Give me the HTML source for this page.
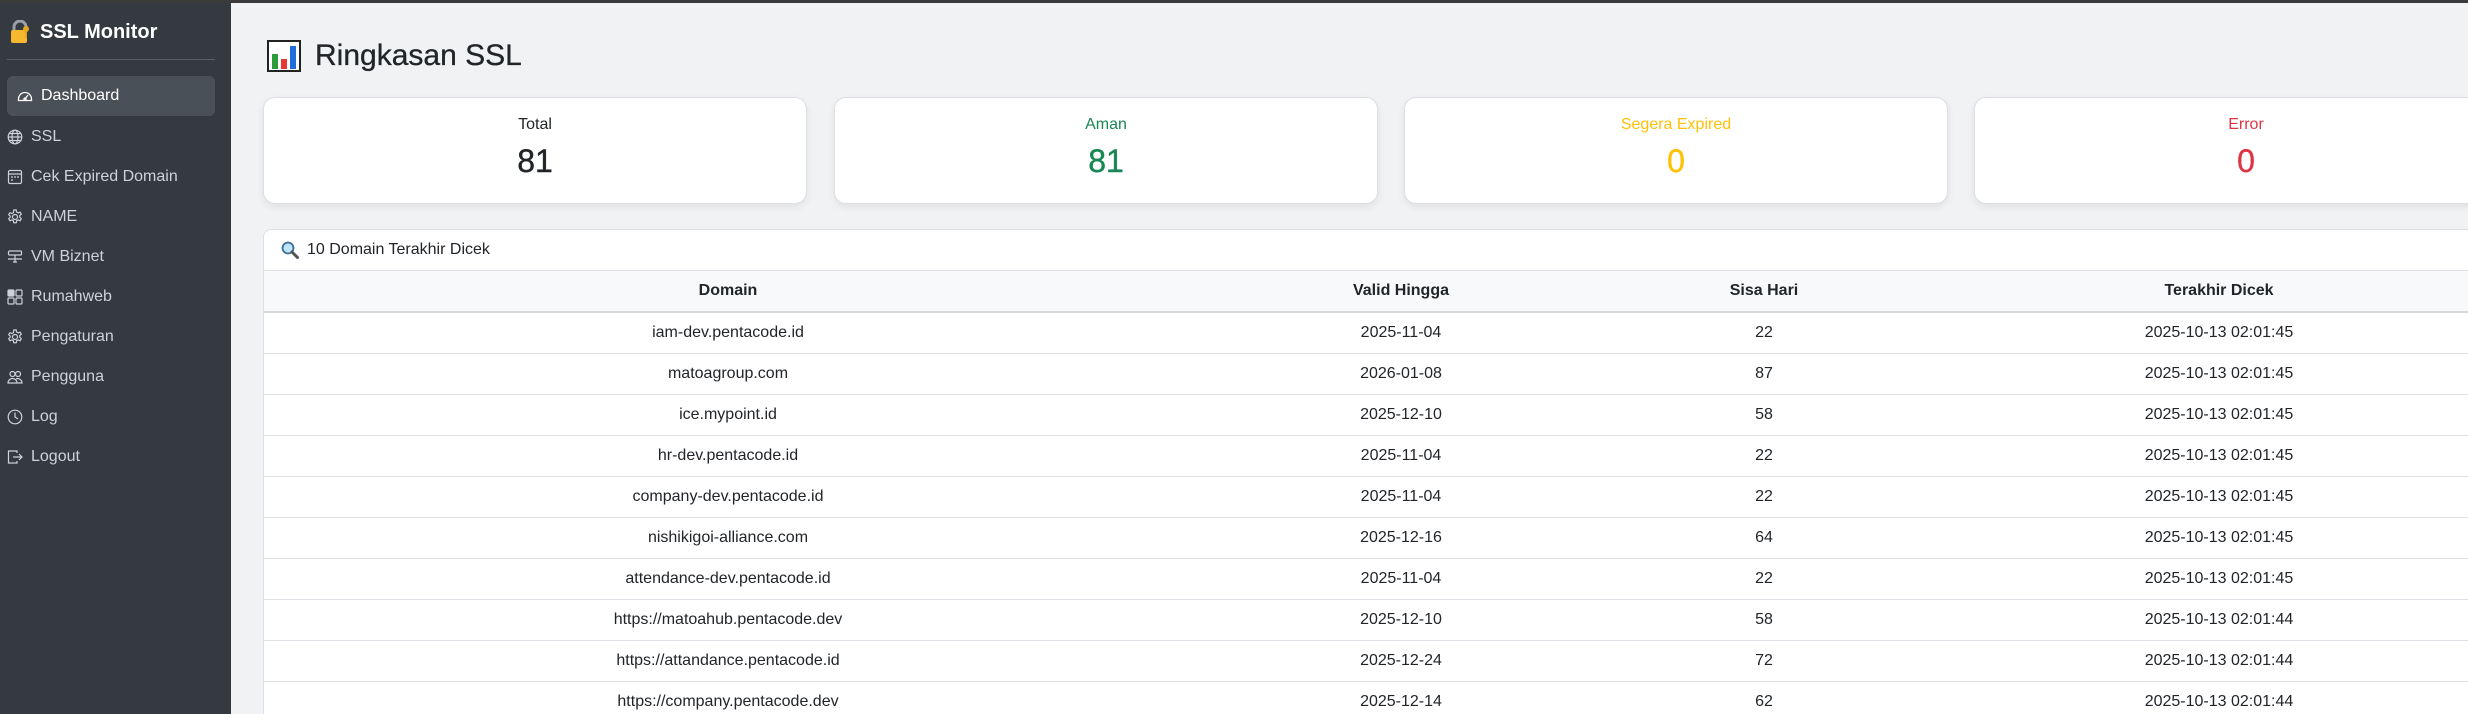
<!DOCTYPE html>
<html><head><meta charset="utf-8"><style>
*{box-sizing:border-box;margin:0;padding:0}
html,body{width:2468px;height:714px;overflow:hidden}
body{font-family:"Liberation Sans",Arial,sans-serif;background:#f1f2f4;color:#212529;position:relative;font-size:16px}
.topline{position:absolute;left:0;top:0;width:2468px;height:3px;background:#3b3b3b;z-index:5}
.side{position:absolute;left:0;top:0;width:231px;height:714px;background:#343a40;color:#fff}
.brand{position:absolute;left:9px;top:19px;height:26px;display:flex;align-items:center;font-weight:bold;font-size:20px}
.brand svg{margin-right:9px}
.div{position:absolute;left:7px;top:59px;width:208px;height:1px;background:#5a6068}
.nav{position:absolute;left:7px;width:208px;height:40px;display:flex;align-items:center;color:#cfd2d6;font-size:16px}
.nav svg{width:16px;height:16px;margin-right:8px;flex:none}
.nav.act{background:#4a5057;border-radius:6px;color:#fff;padding-left:10px}
.main{position:absolute;left:263px;top:0}
h2{position:absolute;left:0;top:39px;font-size:30px;font-weight:normal;white-space:nowrap;display:flex;align-items:center;-webkit-text-stroke:0.3px #212529}
h2 svg{margin-right:14px;margin-left:4px}
.card{position:absolute;top:97px;width:544px;height:107px;background:#fff;border:1px solid #dcdfe3;border-radius:12px;box-shadow:0 3px 8px rgba(0,0,0,.07);text-align:center}
.card .l{position:absolute;top:18px;width:100%;font-size:16px}
.card .n{position:absolute;top:45px;width:100%;font-size:32px;-webkit-text-stroke:0.4px currentColor}
.tc{position:absolute;top:229px;left:0;width:2256px;height:520px;background:#fff;border:1px solid #dcdfe3;border-radius:8px;overflow:hidden}
.th{height:41px;display:flex;align-items:center;padding-left:17px;border-bottom:1px solid #dcdfe3}
.th svg{margin-right:8px}
table{border-collapse:collapse;width:2256px;table-layout:fixed}
td,th{text-align:center;height:41px;border-bottom:1px solid #dee2e6;font-size:16px;padding:0}
thead th{background:#f8f9fa;font-weight:bold;border-bottom:2px solid #d6d9dc;height:41px}
</style></head><body>
<div class="topline"></div>
<div class="side">
 <div class="brand"><svg width="22" height="24" viewBox="0 0 22 24"><path d="M5 11V7a6 6 0 0 1 12 0v4" fill="none" stroke="#9aa0a6" stroke-width="3"/><rect x="2" y="10" width="16" height="13" rx="2" fill="#f5b82e"/><circle cx="17" cy="9" r="3" fill="#e7a81f"/><rect x="16" y="10" width="2" height="8" fill="#e7a81f"/></svg>SSL Monitor</div>
 <div class="div"></div>
 <div class="nav act" style="top:76px"><svg viewBox="0 0 16 16" fill="none" stroke="#fff" stroke-width="1.3"><path d="M1.5 11a6.5 6.5 0 1 1 13 0v1.5h-13z"/><path d="M8 11l3-4"/><circle cx="8" cy="11" r="1"/></svg>Dashboard</div>
 <div class="nav" style="top:117px"><svg viewBox="0 0 16 16" fill="none" stroke="#cfd2d6" stroke-width="1.2"><circle cx="8" cy="8" r="6.8"/><ellipse cx="8" cy="8" rx="3" ry="6.8"/><path d="M1.2 8h13.6M2 4.5h12M2 11.5h12"/></svg>SSL</div>
 <div class="nav" style="top:157px"><svg viewBox="0 0 16 16" fill="none" stroke="#cfd2d6" stroke-width="1.2"><rect x="1.5" y="1.5" width="13" height="13" rx="1.5"/><path d="M1.5 5h13M4 8h2M7 8h2M10 8h2M4 11h2"/></svg>Cek Expired Domain</div>
 <div class="nav" style="top:197px"><svg viewBox="0 0 16 16" fill="none" stroke="#cfd2d6" stroke-width="1.2"><circle cx="8" cy="8" r="2.5"/><path d="M6.8 1h2.4l.4 2 1.6.9 1.9-.8 1.2 2-1.5 1.4v1.8l1.5 1.4-1.2 2-1.9-.8-1.6.9-.4 2H6.8l-.4-2-1.6-.9-1.9.8-1.2-2 1.5-1.4V7.1L1.7 5.7l1.2-2 1.9.8 1.6-.9z"/></svg>NAME</div>
 <div class="nav" style="top:237px"><svg viewBox="0 0 16 16" fill="none" stroke="#cfd2d6" stroke-width="1.2"><rect x="1.5" y="2" width="13" height="4" rx="1"/><path d="M8 6v4M1 10h14M6 13h4M8 10v3"/></svg>VM Biznet</div>
 <div class="nav" style="top:277px"><svg viewBox="0 0 16 16" fill="none" stroke="#cfd2d6" stroke-width="1.2"><rect x="1" y="1" width="6" height="6" rx="1" fill="#cfd2d6"/><rect x="9" y="1" width="6" height="6" rx="1"/><rect x="1" y="9" width="6" height="6" rx="1"/><rect x="9" y="9" width="6" height="6" rx="1"/></svg>Rumahweb</div>
 <div class="nav" style="top:317px"><svg viewBox="0 0 16 16" fill="none" stroke="#cfd2d6" stroke-width="1.2"><circle cx="8" cy="8" r="2.5"/><path d="M6.8 1h2.4l.4 2 1.6.9 1.9-.8 1.2 2-1.5 1.4v1.8l1.5 1.4-1.2 2-1.9-.8-1.6.9-.4 2H6.8l-.4-2-1.6-.9-1.9.8-1.2-2 1.5-1.4V7.1L1.7 5.7l1.2-2 1.9.8 1.6-.9z"/></svg>Pengaturan</div>
 <div class="nav" style="top:357px"><svg viewBox="0 0 16 16" fill="none" stroke="#cfd2d6" stroke-width="1.2"><circle cx="5.5" cy="5" r="2.5"/><circle cx="11" cy="5" r="2.5"/><path d="M1 14a4.5 4.5 0 0 1 9 0zM9.5 14H15a4.5 4.5 0 0 0-6-4.2"/></svg>Pengguna</div>
 <div class="nav" style="top:397px"><svg viewBox="0 0 16 16" fill="none" stroke="#cfd2d6" stroke-width="1.2"><circle cx="8" cy="8" r="6.8"/><path d="M8 3.5V8l3 2"/></svg>Log</div>
 <div class="nav" style="top:437px"><svg viewBox="0 0 16 16" fill="none" stroke="#cfd2d6" stroke-width="1.2"><path d="M10 4V2H1.5v12H10v-2"/><path d="M6 8h9M12 5l3 3-3 3"/></svg>Logout</div>
</div>
<div class="main">
 <h2><svg width="34" height="32" viewBox="0 0 34 32"><rect x="1" y="1" width="32" height="30" fill="#fff" stroke="#222" stroke-width="2"/><rect x="5" y="14" width="6" height="15" fill="#2a9d3a"/><rect x="14" y="19" width="6" height="10" fill="#e53935"/><rect x="23" y="6" width="6" height="23" fill="#1e6fd9"/></svg>Ringkasan SSL</h2>
 <div class="card" style="left:0"><div class="l">Total</div><div class="n">81</div></div>
 <div class="card" style="left:571px"><div class="l" style="color:#198754">Aman</div><div class="n" style="color:#198754">81</div></div>
 <div class="card" style="left:1141px"><div class="l" style="color:#ffc107">Segera Expired</div><div class="n" style="color:#ffc107">0</div></div>
 <div class="card" style="left:1711px"><div class="l" style="color:#dc3545">Error</div><div class="n" style="color:#dc3545">0</div></div>
 <div class="tc">
  <div class="th"><svg width="18" height="18" viewBox="0 0 18 18"><circle cx="7" cy="7" r="5.5" fill="#bfe3f7" stroke="#3a6f99" stroke-width="1.8"/><path d="M11 11l5.5 5.5" stroke="#555" stroke-width="3" stroke-linecap="round"/></svg>10 Domain Terakhir Dicek</div>
  <table><colgroup><col style="width:928px"><col style="width:418px"><col style="width:308px"><col style="width:602px"></colgroup>
  <thead><tr><th>Domain</th><th>Valid Hingga</th><th>Sisa Hari</th><th>Terakhir Dicek</th></tr></thead>
  <tbody>
  <tr><td>iam-dev.pentacode.id</td><td>2025-11-04</td><td>22</td><td>2025-10-13 02:01:45</td></tr>
  <tr><td>matoagroup.com</td><td>2026-01-08</td><td>87</td><td>2025-10-13 02:01:45</td></tr>
  <tr><td>ice.mypoint.id</td><td>2025-12-10</td><td>58</td><td>2025-10-13 02:01:45</td></tr>
  <tr><td>hr-dev.pentacode.id</td><td>2025-11-04</td><td>22</td><td>2025-10-13 02:01:45</td></tr>
  <tr><td>company-dev.pentacode.id</td><td>2025-11-04</td><td>22</td><td>2025-10-13 02:01:45</td></tr>
  <tr><td>nishikigoi-alliance.com</td><td>2025-12-16</td><td>64</td><td>2025-10-13 02:01:45</td></tr>
  <tr><td>attendance-dev.pentacode.id</td><td>2025-11-04</td><td>22</td><td>2025-10-13 02:01:45</td></tr>
  <tr><td>https://matoahub.pentacode.dev</td><td>2025-12-10</td><td>58</td><td>2025-10-13 02:01:44</td></tr>
  <tr><td>https://attandance.pentacode.id</td><td>2025-12-24</td><td>72</td><td>2025-10-13 02:01:44</td></tr>
  <tr><td>https://company.pentacode.dev</td><td>2025-12-14</td><td>62</td><td>2025-10-13 02:01:44</td></tr>
  </tbody></table>
 </div>
</div>
</body></html>
